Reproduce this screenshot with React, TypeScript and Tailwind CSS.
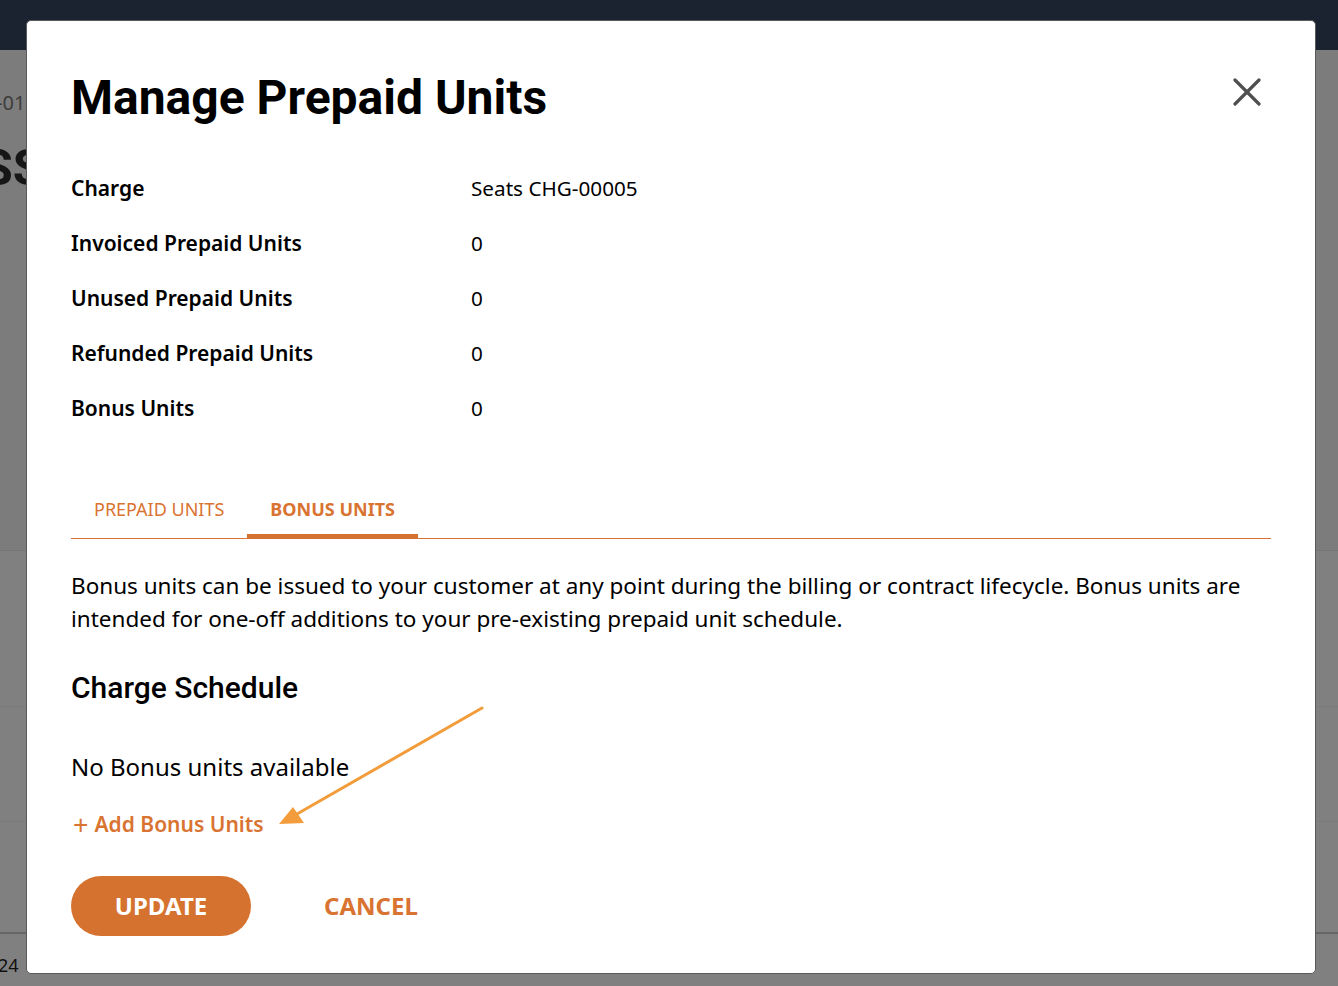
import React, { useState } from 'react';

const rows = [
  { label: 'Charge', value: 'Seats CHG-00005' },
  { label: 'Invoiced Prepaid Units', value: '0' },
  { label: 'Unused Prepaid Units', value: '0' },
  { label: 'Refunded Prepaid Units', value: '0' },
  { label: 'Bonus Units', value: '0' },
];

const noto = { fontFamily: '"Noto Sans", "Open Sans", sans-serif' };
const roboto = { fontFamily: 'Roboto, "Noto Sans", sans-serif' };

export default function App() {
  const [tab, setTab] = useState('bonus');

  return (
    <div className="relative w-[1338px] h-[986px] overflow-hidden bg-[#808080]" style={noto}>
      {/* page behind the dialog, dimmed */}
      <div className="h-[50px] bg-[#1b2230]" />
      <div className="h-[501px] bg-[#7c7c7c] border-b border-[#767676] overflow-hidden">
        <div className="mt-[40px] text-[20px] leading-[26px] text-[#3c3c3c] ml-[-4px]">-01</div>
        <div className="mt-[24px] text-[50px] leading-[56px] font-bold text-[#161616] ml-[-18px]" style={roboto}>SS</div>
      </div>
      <div className="h-[156px] border-b border-[#7a7a7a]" />
      <div className="h-[115px] border-b border-[#7a7a7a]" />
      <div className="h-[112px] border-b-2 border-[#666666]" />
      <div className="pt-[19px] text-[18px] leading-[24px] text-[#111] ml-[-2px]">24</div>

      {/* dialog */}
      <div className="absolute left-[26px] top-[20px] w-[1290px] h-[954px] bg-white rounded-[5px] border border-[#5a5a5a] px-[44px] pt-[49px] pb-[38px]">
        <div className="flex items-start justify-between">
          <h1 className="text-[48px] leading-[56px] font-bold text-black" style={roboto}>
            Manage Prepaid Units
          </h1>
          <button className="mt-[8px] mr-[10px] w-[28px] h-[28px] flex items-center justify-center">
            <svg width="28" height="28" viewBox="0 0 28 28" fill="none" stroke="#4f4f4f" strokeWidth="3.2" strokeLinecap="round">
              <line x1="2" y1="2" x2="26" y2="26" />
              <line x1="26" y1="2" x2="2" y2="26" />
            </svg>
          </button>
        </div>

        <div className="mt-[35px]">
          {rows.map((r) => (
            <div key={r.label} className="flex items-center h-[55px] text-black">
              <div className="w-[400px] text-[21px] font-semibold">{r.label}</div>
              <div className="text-[20.7px]">{r.value}</div>
            </div>
          ))}
        </div>

        <div className="mt-[47px] flex border-b border-[#d97331]">
          {[
            { id: 'prepaid', name: 'PREPAID UNITS' },
            { id: 'bonus', name: 'BONUS UNITS' },
          ].map((t) => (
            <button
              key={t.id}
              onClick={() => setTab(t.id)}
              className={
                tab === t.id
                  ? 'h-[56px] px-[23px] mb-[-1px] pt-[1px] border-b-[5px] border-[#d6722f] text-[18px] font-bold text-[#d97331]'
                  : 'h-[56px] px-[23px] mb-[-1px] pt-[1px] border-b-[5px] border-transparent text-[18px] text-[#d97331]'
              }
            >
              {t.name}
            </button>
          ))}
        </div>

        <p className="mt-[30px] text-[22.5px] leading-[33px] text-black">
          Bonus units can be issued to your customer at any point during the billing or contract lifecycle. Bonus units are
          intended for one-off additions to your pre-existing prepaid unit schedule.
        </p>

        <h2 className="mt-[35px] text-[30px] leading-[36px] font-medium text-black" style={roboto}>
          Charge Schedule
        </h2>

        <div className="mt-[45px] text-[24px] leading-[32px] text-black">No Bonus units available</div>

        <button className="mt-[28px] flex items-center h-[28px] text-[21px] font-semibold text-[#d97331]">
          <span className="ml-[2px] mr-[6px] text-[27px] font-normal leading-[28px]">+</span>
          Add Bonus Units
        </button>

        <div className="mt-[37px] flex items-center">
          <button className="w-[180px] h-[60px] rounded-full bg-[#d6722f] text-white text-[24px] font-bold">
            UPDATE
          </button>
          <button className="ml-[73px] text-[24px] font-bold text-[#d97331]">CANCEL</button>
        </div>

        {/* annotation arrow */}
        <svg className="absolute left-0 top-0 pointer-events-none" width="1290" height="954" viewBox="0 0 1290 954">
          <line x1="455" y1="687" x2="270" y2="793" stroke="#f29c3b" strokeWidth="3" strokeLinecap="round" />
          <polygon points="252,803 277,802 266,786" fill="#f29c3b" />
        </svg>
      </div>
    </div>
  );
}
